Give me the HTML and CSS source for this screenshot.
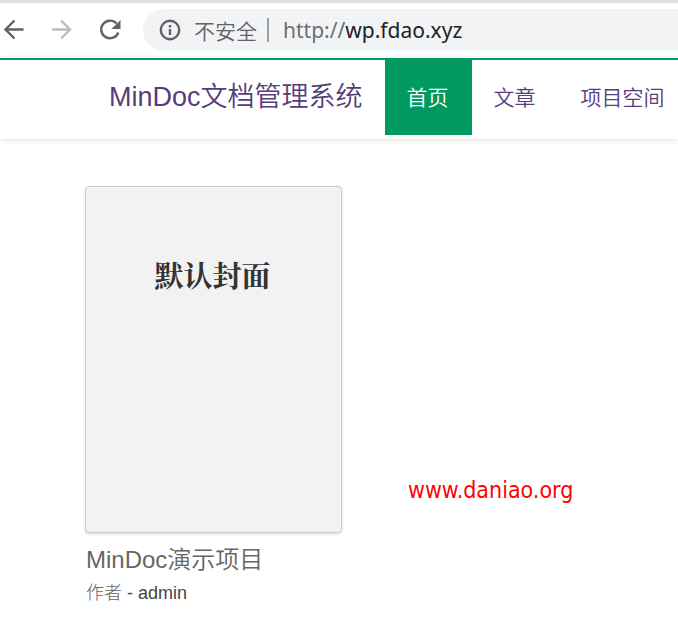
FILE: index.html
```html
<!DOCTYPE html>
<html lang="zh-CN">
<head>
<meta charset="utf-8">
<meta name="viewport" content="width=device-width, initial-scale=1">
<title>MinDoc文档管理系统</title>
<link rel="stylesheet" href="styles.css">
</head>
<body>
<div class="toolbar">
  <button class="tool" type="button" aria-label="后退">
    <svg viewBox="0 0 24 24"><path d="M21.500 11.500H3.500M12.500 2.500l-9 9 9 9"/></svg>
  </button>
  <button class="tool" type="button" aria-label="前进" disabled>
    <svg viewBox="0 0 24 24"><path d="M2 11.500h18M11 2.500l9 9-9 9"/></svg>
  </button>
  <button class="tool" type="button" aria-label="刷新">
    <svg viewBox="0 0 24 24"><path d="M18.500 5.500A8.800 8.800 0 1 0 20.300 14.500"/><path class="solid" d="M22.500 2v9h-9z"/></svg>
  </button>
  <div class="address">
    <button class="security" type="button">
      <svg viewBox="0 0 24 24"><circle cx="12" cy="12" r="9.200"/><path d="M12 11v6M12 7v2.500"/></svg>
      <span>不安全</span>
    </button>
    <span class="url"><span class="scheme">http://</span>wp.fdao.xyz</span>
  </div>
</div>
<header class="header">
  <a class="brand" href="#">MinDoc文档管理系统</a>
  <nav class="nav">
    <a class="active" href="#">首页</a>
    <a href="#">文章</a>
    <a href="#">项目空间</a>
  </nav>
</header>
<main class="main">
  <article class="book">
    <a class="cover" href="#">默认封面</a>
    <h2 class="book-title"><a href="#">MinDoc演示项目</a></h2>
    <p class="author"><span>作者</span> - admin</p>
  </article>
  <p class="watermark">www.daniao.org</p>
</main>
</body>
</html>
```
FILE: styles.css
```css
* {
  box-sizing: border-box;
}

body {
  margin: 0;
  background: #fff;
  font-family: "Liberation Sans", "Noto Sans CJK SC", sans-serif;
  overflow-x: hidden;
}

a {
  color: inherit;
  text-decoration: none;
}

button {
  padding: 0;
  border: 0;
  background: none;
  font: inherit;
  color: inherit;
}

.toolbar {
  display: flex;
  align-items: center;
  gap: 24px;
  height: 58px;
  padding: 0 0 1px 2px;
  border-top: 3px solid #dee1e6;
  color: #5f6368;
}

.tool {
  flex: none;
  width: 24px;
  height: 24px;
}

.tool:disabled {
  color: #babcbe;
}

svg {
  display: block;
  width: 24px;
  height: 24px;
  fill: none;
  stroke: currentColor;
  stroke-width: 2.4;
}

.solid {
  fill: currentColor;
  stroke: none;
}

.address {
  display: flex;
  flex: 1;
  align-items: center;
  height: 42px;
  margin-left: -3px;
  padding-left: 15px;
  border-radius: 21px 0 0 21px;
  background: #f1f3f4;
  white-space: nowrap;
}

.security {
  display: flex;
  align-items: center;
  gap: 12px;
  height: 24px;
  padding-right: 10px;
  border-right: 2px solid #9aa0a6;
  font-family: "Noto Sans CJK SC", sans-serif;
  font-weight: 350;
  font-size: 21px;
  line-height: 24px;
}

.url {
  padding-left: 14px;
  font-family: "Noto Sans", sans-serif;
  font-size: 21px;
  color: #202124;
}

.scheme {
  color: #6b6f74;
}

.header {
  display: flex;
  height: 81px;
  padding-left: 109px;
  border-top: 2px solid #009a61;
  box-shadow: 0 1px 6px rgba(0, 0, 0, 0.12);
  color: #563d7c;
  font-weight: 350;
  line-height: 75px;
  white-space: nowrap;
}

.brand {
  margin-right: 22px;
  font-size: 27px;
}

.nav {
  display: flex;
  font-size: 21px;
}

.nav a {
  height: 75px;
  padding: 0 23px 0 22px;
}

.nav .active {
  background: #009a61;
  color: #fff;
}

.main {
  display: flex;
  gap: 66px;
  padding: 47px 0 0 85px;
}

.book {
  flex: none;
  width: 257px;
}

.cover {
  display: block;
  height: 347px;
  padding: 68px 2px 0 0;
  border: 1px solid #ccc;
  border-radius: 4px;
  background: #f2f2f2;
  box-shadow: 0 1px 3px rgba(0, 0, 0, 0.16);
  color: #333;
  font-family: "Noto Serif CJK SC", "Noto Sans CJK SC", serif;
  font-size: 29px;
  font-weight: 700;
  line-height: 40px;
  text-align: center;
}

.book-title {
  margin: 10px 0 0;
  padding-left: 1px;
  color: #666;
  font-size: 24px;
  font-weight: 350;
  line-height: 34px;
}

.author {
  margin: 4px 0 0;
  padding-left: 1px;
  color: #444;
  font-size: 18px;
  line-height: 24px;
}

.author span {
  color: #666;
  font-weight: 300;
}

.watermark {
  margin: 289px 0 0;
  color: #f00;
  font-family: "DejaVu Sans Condensed", "DejaVu Sans", sans-serif;
  font-size: 23px;
  line-height: 30px;
}
```
